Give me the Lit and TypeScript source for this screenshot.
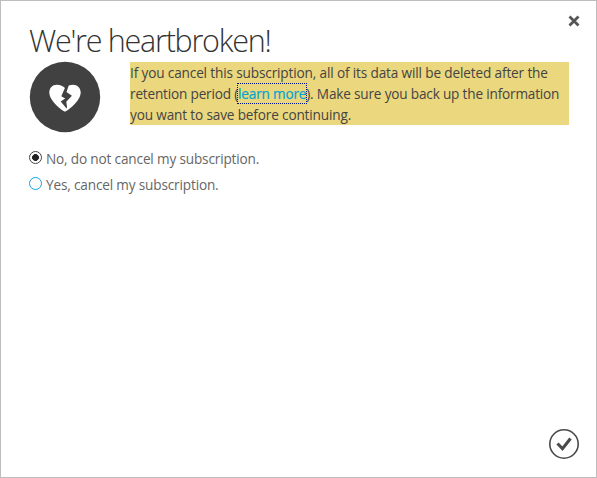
import { LitElement, html, css } from "lit";
import { customElement, state } from "lit/decorators.js";
import { classMap } from "lit/directives/class-map.js";

@customElement("app-root")
export class AppRoot extends LitElement {
  @state() private choice = "no";

  static styles = css`
    :host { display: block; width: 597px; height: 478px; font-family: "Open Sans", "Noto Sans", sans-serif; font-size: 13.6px; color: #444; }
    .dialog { position: relative; box-sizing: border-box; height: 100%; border: 1px solid #bdbdbd; background: #fff; padding: 17px 27px 0 28px; overflow: hidden; }
    button { position: absolute; padding: 0; border: 0; background: none; }
    svg { display: block; }
    .close { top: 14px; right: 16px; }
    .confirm { right: 17px; bottom: 18px; }
    h1 { margin: 0; height: 43px; line-height: 45px; font-size: 30.5px; font-weight: 300; letter-spacing: -1.25px; color: #333; white-space: nowrap; }
    .intro { display: flex; gap: 29px; height: 72px; align-items: flex-start; }
    .badge { flex: none; }
    .warning { box-sizing: border-box; height: 63px; flex: 1; background: #ebd77d; margin: 1px 0 0; line-height: 21px; white-space: nowrap; }
    .line { display: block; }
    .l1 { letter-spacing: -0.14px; }
    .l2 { letter-spacing: -0.18px; }
    .l3 { letter-spacing: -0.15px; }
    a { color: #00a3d4; -webkit-text-stroke: 0.2px #00a3d4; outline: 1px dotted #00138c; }
    .options { display: grid; grid-auto-rows: 26px; margin-top: 12px; color: #666; }
    .option { display: flex; align-items: center; gap: 4px; white-space: nowrap; }
    .dot { box-sizing: border-box; width: 13px; height: 13px; border: 1px solid #1a9fdc; border-radius: 50%; position: relative; top: -1px; }
    .dot.on { border-color: #444; background: radial-gradient(circle, #222 0 3.1px, #fff 3.7px); }
    .label { letter-spacing: -0.16px; }
  `;

  private option(id: string, text: string) {
    return html`<div class="option" @click=${() => (this.choice = id)}>
      <span class=${classMap({ dot: true, on: this.choice === id })}></span><span class="label">${text}</span>
    </div>`;
  }

  render() {
    return html`<div class="dialog">
      <button class="close" aria-label="Close"><svg width="12" height="12" viewBox="0 0 12 12"><path d="M1.5 1.5L10.5 10.5M10.5 1.5L1.5 10.5" stroke="#555" stroke-width="2.8" /></svg></button>
      <h1>We're heartbroken!</h1>
      <div class="intro">
        <svg class="badge" width="72" height="72" viewBox="0 0 72 72">
          <circle cx="36" cy="36" r="35.2" fill="#414141" />
          <path d="M36 50C34 50 20.3 39.5 20.3 31C20.3 26.5 23.4 23.2 27.8 23.2C31.3 23.2 34.2 24.8 36 26.5C37.8 24.5 40.7 23.2 44 23.2C48.4 23.2 51.7 26.5 51.7 31C51.7 39.5 38 50 36 50Z" fill="#fff" transform="translate(0 .5)" />
          <path d="M36 22L36 26.3L32.3 34.7L36.2 37L31.7 40L37.6 47L38 45.5L37.3 40.3L42.9 34.3L37.5 30.5L39.4 24.9L39 22Z" fill="#414141" transform="translate(0 .5)" />
        </svg>
        <p class="warning">
          <span class="line"><span class="l1">If you cancel this subscription, all of its data will be deleted after the</span></span>
          <span class="line"><span class="l2">retention period (<a>learn more</a>). Make sure you back up the information</span></span>
          <span class="line"><span class="l3">you want to save before continuing.</span></span>
        </p>
      </div>
      <div class="options">
        ${this.option("no", "No, do not cancel my subscription.")}
        ${this.option("yes", "Yes, cancel my subscription.")}
      </div>
      <button class="confirm" aria-label="Confirm"><svg width="30" height="30" viewBox="0 0 30 30"><circle cx="15" cy="15" r="14.2" fill="none" stroke="#4a4a4a" stroke-width="1.6" /><path d="M8.5 14.5L13.5 19.7L21.5 9.5" fill="none" stroke="#4a4a4a" stroke-width="3.1" /></svg></button>
    </div>`;
  }
}
